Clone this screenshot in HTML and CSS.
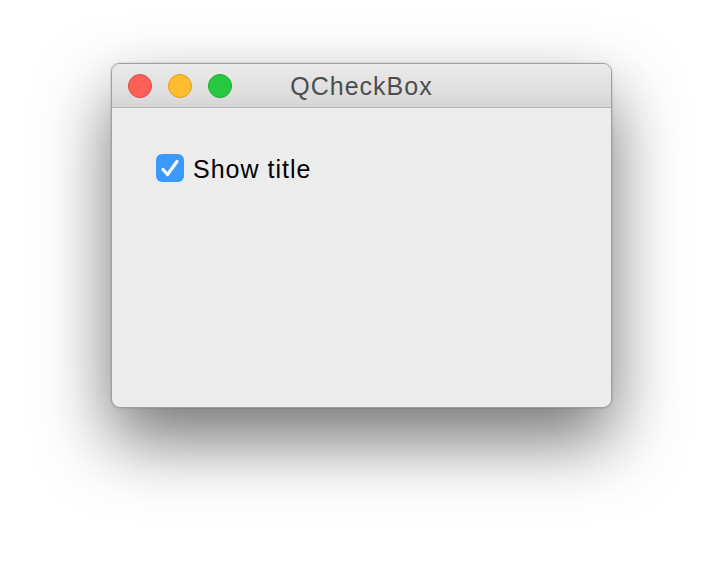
FILE: index.html
```html
<!DOCTYPE html>
<html lang="en">
<head>
    <meta charset="UTF-8">
    <title>QCheckBox</title>
    <link rel="stylesheet" href="styles.css">
</head>
<body>
    <div class="window">
        <div class="titlebar">
            <div class="lights">
                <span class="light close"></span>
                <span class="light min"></span>
                <span class="light max"></span>
            </div>
            <div class="title">QCheckBox</div>
        </div>
        <div class="content">
            <label class="check">
                <span class="box">
                    <svg width="28" height="28" viewBox="0 0 28 28">
                        <path d="M7 15.5 L11.5 20.5 L21 7.5" fill="none" stroke="#fff" stroke-width="3.2" stroke-linecap="round" stroke-linejoin="round"/>
                    </svg>
                </span>
                <span class="label">Show title</span>
            </label>
        </div>
    </div>
</body>
</html>
```

FILE: styles.css
```css
body {
    margin: 0;
    width: 724px;
    height: 568px;
    background: #fff;
    padding: 63px 0 0 111px;
    box-sizing: border-box;
    font-family: "Liberation Sans", Arial, sans-serif;
}

.window {
    width: 501px;
    height: 345px;
    background: #ececec;
    border-radius: 9px;
    border: 1px solid #a0a0a0;
    box-sizing: border-box;
    overflow: hidden;
    box-shadow: 0 32px 70px rgba(0, 0, 0, 0.55), 0 0 2px rgba(0, 0, 0, 0.25);
}

.titlebar {
    height: 43px;
    background: linear-gradient(#ebebeb, #d6d6d6);
    border-bottom: 1px solid #b4b4b4;
    position: relative;
    display: flex;
    align-items: center;
}

.lights {
    display: flex;
    gap: 16px;
    padding-left: 16px;
}

.light {
    width: 24px;
    height: 24px;
    border-radius: 50%;
    box-sizing: border-box;
}

.close { background: #fe5f57; border: 1px solid #e2463f; }
.min { background: #febc2e; border: 1px solid #e1a116; }
.max { background: #28c840; border: 1px solid #14ae2a; }

.title {
    position: absolute;
    left: 0;
    right: 0;
    text-align: center;
    font-size: 25px;
    letter-spacing: 1px;
    color: #4d4d4d;
    padding-top: 1px;
}

.content {
    padding: 46px 0 0 44px;
}

.check {
    display: flex;
    align-items: flex-start;
    gap: 9px;
}

.box {
    width: 28px;
    height: 28px;
    border-radius: 6px;
    background: #3b99fc;
    display: flex;
}

.label {
    font-size: 25px;
    line-height: 28px;
    letter-spacing: 1px;
    color: #000;
    padding-top: 1px;
}
```
